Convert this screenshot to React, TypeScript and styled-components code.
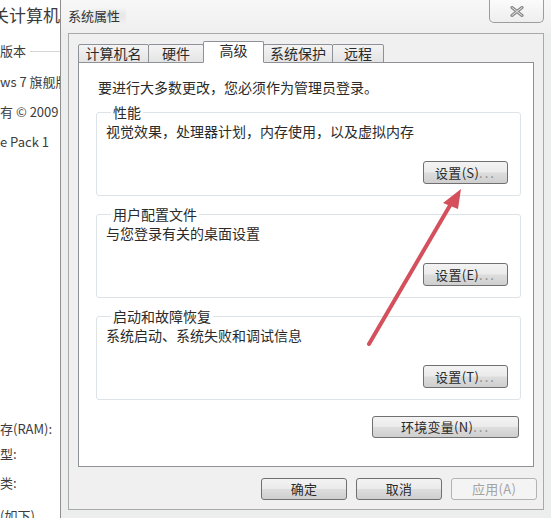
import React from 'react';
import styled, { createGlobalStyle } from 'styled-components';

const GlobalStyle = createGlobalStyle`
  html, body {
    margin: 0;
    padding: 0;
    background: #ffffff;
  }
  body {
    width: 551px;
    height: 518px;
    overflow: hidden;
    font-family: "Noto Sans CJK SC", "Liberation Sans", sans-serif;
    color: #2a2a2a;
  }
`;

const Page = styled.div`
  position: relative;
  display: flex;
  width: 551px;
  height: 518px;
  overflow: hidden;
`;

const BackWindow = styled.div`
  width: 60px;
  flex: none;
  overflow: hidden;
  display: flex;
  flex-direction: column;
  background: #ffffff;
  white-space: nowrap;
`;

const BackHeading = styled.div`
  font-size: 17px;
  line-height: 20px;
  margin: 5px 0 0 -8px;
  color: #3a3a3a;
`;

const BackSection = styled.div`
  display: flex;
  align-items: center;
  gap: 4px;
  font-size: 13px;
  line-height: 18px;
  margin-top: 17px;
  color: #3c3c3c;

  &::after {
    content: '';
    flex: 1;
    height: 1px;
    background: #d6d6d6;
  }
`;

const BackLine = styled.div<{ $top: number }>`
  font-size: 13px;
  line-height: 18px;
  margin-top: ${(p) => p.$top}px;
  color: #3c3c3c;

  &:last-child {
    margin-bottom: -7px;
  }
`;

const Spacer = styled.div`
  flex: 1;
`;

const Dialog = styled.div`
  flex: 1;
  display: flex;
  flex-direction: column;
  border-left: 1px solid #8f8f8f;
  background: #eceded;
`;

const TitleBar = styled.div`
  height: 33px;
  flex: none;
  display: flex;
  align-items: flex-start;
  justify-content: space-between;
  background: linear-gradient(#f7f7f7, #efefef);
`;

const Title = styled.div`
  font-size: 13px;
  line-height: 18px;
  margin: 7px 0 0 7px;
  padding: 0 6px 0 0;
  color: #333;
  background: radial-gradient(ellipse at 70% 50%, #e2e2e2 0%, rgba(226, 226, 226, 0) 70%);
`;

const CloseButton = styled.div`
  width: 55px;
  height: 23px;
  margin-right: 7px;
  box-sizing: border-box;
  border: 1px solid #9d9d9d;
  border-top: none;
  border-radius: 0 0 5px 5px;
  background: linear-gradient(#fbfbfb, #eeeeee);
  display: flex;
  align-items: center;
  justify-content: center;
`;

const Body = styled.div`
  margin: 0 7px 0 7px;
  flex: none;
  height: 477px;
  box-sizing: border-box;
  border: 1px solid #a9a9a9;
  background: #f0f0f0;
  padding: 9px 9px 0 9px;
  display: flex;
  flex-direction: column;
`;

const TabRow = styled.div`
  display: flex;
  align-items: flex-end;
  height: 20px;
  padding-left: 1px;
  margin-bottom: -1px;
  position: relative;
  z-index: 1;
`;

const Tab = styled.div<{ $width: number; $active?: boolean }>`
  width: ${(p) => p.$width}px;
  height: ${(p) => (p.$active ? 22 : 19)}px;
  box-sizing: border-box;
  margin-left: -1px;
  border: 1px solid #8e9197;
  border-bottom-color: ${(p) => (p.$active ? '#ffffff' : '#8e9197')};
  border-radius: 2px 2px 0 0;
  background: ${(p) => (p.$active ? '#ffffff' : 'linear-gradient(#f4f4f4, #e4e4e4)')};
  font-size: 14px;
  line-height: 17px;
  text-align: center;
  color: #2a2a2a;
  position: relative;
  z-index: ${(p) => (p.$active ? 2 : 1)};
`;

const Panel = styled.div`
  height: 405px;
  box-sizing: border-box;
  border: 1px solid #8e9197;
  background: #ffffff;
  padding: 15px 12px 0 17px;
  display: flex;
  flex-direction: column;
`;

const Notice = styled.div`
  font-size: 14px;
  line-height: 18px;
  padding-left: 2px;
  margin-bottom: 7px;
`;

const Group = styled.fieldset`
  margin: 0 0 9px 0;
  padding: 0 12px 11px 9px;
  border: 1px solid #dde3e6;
  border-radius: 3px;
  min-width: 0;
`;

const Legend = styled.legend`
  font-size: 14px;
  line-height: 18px;
  padding: 0 2px;
  margin-left: 5px;
  color: #2a2a2a;
`;

const Description = styled.div`
  font-size: 14px;
  line-height: 18px;
  margin-top: 1px;
`;

const ButtonRow = styled.div<{ $top?: number }>`
  display: flex;
  justify-content: flex-end;
  margin-top: ${(p) => p.$top ?? 21}px;
`;

const Button = styled.button<{ $width: number; $height?: number }>`
  width: ${(p) => p.$width}px;
  height: ${(p) => p.$height ?? 23}px;
  box-sizing: border-box;
  border: 1px solid #707070;
  border-radius: 3px;
  background: linear-gradient(#f3f3f3 0%, #ebebeb 48%, #dddddd 52%, #cfcfcf 100%);
  font-family: "Noto Sans CJK SC", "Liberation Sans", sans-serif;
  font-size: 13px;
  line-height: 16px;
  color: #2a2a2a;
  padding: 0;
  letter-spacing: 0.3px;

  &:disabled {
    border-color: #b0b4b6;
    background: #f4f4f4;
    color: #a4a4a4;
  }
`;

const Dots = styled.span`
  color: #8a8a8a;
  letter-spacing: 2px;
`;

const EnvRow = styled.div`
  display: flex;
  justify-content: flex-end;
  margin: 7px 2px 0 0;
`;

const Footer = styled.div`
  display: flex;
  justify-content: flex-end;
  gap: 9px;
  margin: 11px -3px 0 0;
`;

const ArrowLayer = styled.svg`
  position: absolute;
  left: 0;
  top: 0;
  pointer-events: none;
`;

const groups = [
  { title: '性能', text: '视觉效果，处理器计划，内存使用，以及虚拟内存', key: 'S' },
  { title: '用户配置文件', text: '与您登录有关的桌面设置', key: 'E' },
  { title: '启动和故障恢复', text: '系统启动、系统失败和调试信息', key: 'T' },
];

const tabs = [
  { label: '计算机名', width: 71 },
  { label: '硬件', width: 56 },
  { label: '高级', width: 61, active: true },
  { label: '系统保护', width: 70 },
  { label: '远程', width: 52 },
];

const App = (): JSX.Element => (
  <>
    <GlobalStyle />
    <Page>
      <BackWindow>
        <BackHeading>关计算机</BackHeading>
        <BackSection>版本</BackSection>
        <BackLine $top={13}>ws 7 旗舰版</BackLine>
        <BackLine $top={12}>有 © 2009</BackLine>
        <BackLine $top={12}>e Pack 1</BackLine>
        <Spacer />
        <BackLine $top={0}>存(RAM):</BackLine>
        <BackLine $top={7}>型:</BackLine>
        <BackLine $top={11}>类:</BackLine>
        <BackLine $top={15}>(如下)</BackLine>
      </BackWindow>
      <Dialog>
        <TitleBar>
          <Title>系统属性</Title>
          <CloseButton>
            <svg width="14" height="11" viewBox="0 0 14 11">
              <path d="M2 1.5 L12 9.5 M12 1.5 L2 9.5" stroke="#8a8a8a" strokeWidth="3.2" strokeLinecap="round" />
              <path d="M2 1.5 L12 9.5 M12 1.5 L2 9.5" stroke="#e8e8e8" strokeWidth="1" strokeLinecap="round" />
            </svg>
          </CloseButton>
        </TitleBar>
        <Body>
          <TabRow>
            {tabs.map((t) => (
              <Tab key={t.label} $width={t.width} $active={t.active}>
                {t.label}
              </Tab>
            ))}
          </TabRow>
          <Panel>
            <Notice>要进行大多数更改，您必须作为管理员登录。</Notice>
            {groups.map((g) => (
              <Group key={g.key}>
                <Legend>{g.title}</Legend>
                <Description>{g.text}</Description>
                <ButtonRow>
                  <Button $width={85}>
                    设置({g.key})<Dots>...</Dots>
                  </Button>
                </ButtonRow>
              </Group>
            ))}
            <EnvRow>
              <Button $width={147} $height={22}>
                环境变量(N)<Dots>...</Dots>
              </Button>
            </EnvRow>
          </Panel>
          <Footer>
            <Button $width={86} $height={22}>确定</Button>
            <Button $width={86} $height={22}>取消</Button>
            <Button $width={86} $height={22} disabled>应用(A)</Button>
          </Footer>
        </Body>
      </Dialog>
      <ArrowLayer width="551" height="518" viewBox="0 0 551 518">
        <line x1="369" y1="344" x2="452" y2="202" stroke="#d4505c" strokeWidth="4" strokeLinecap="round" />
        <polygon points="461,189 443,203 458,209" fill="#d4505c" />
      </ArrowLayer>
    </Page>
  </>
);

export default App;
